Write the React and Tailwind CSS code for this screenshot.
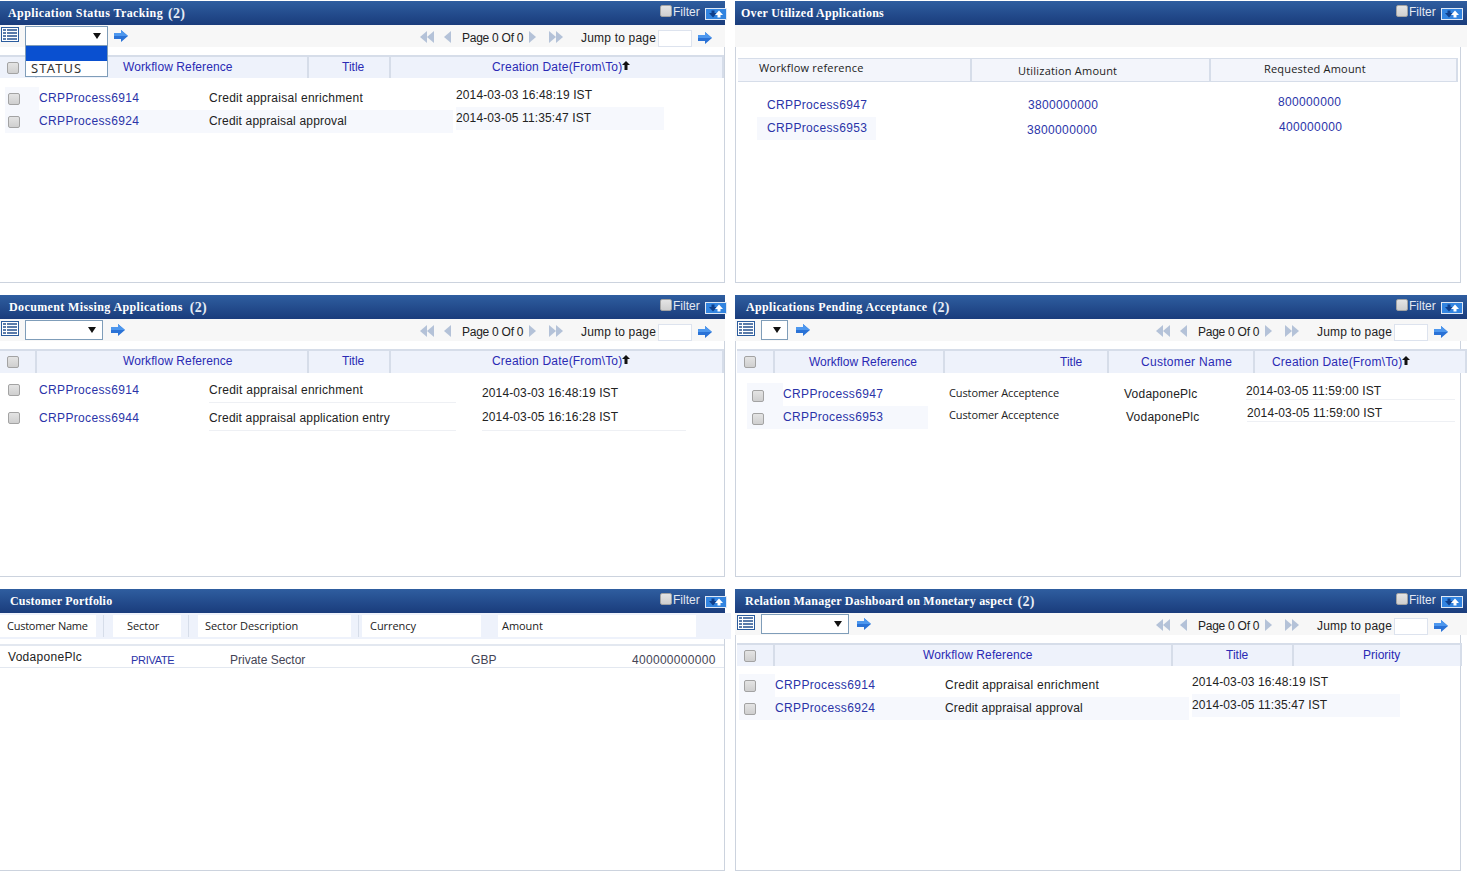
import React from 'react';

const sans = "font-['Liberation_Sans',Arial,sans-serif]";
const open = "font-['Open_Sans',sans-serif]";

const GridIcon = () => (
  <svg width="18" height="15" viewBox="0 0 18 15" className="shrink-0 mb-[4px]">
    <rect x="0.5" y="0.5" width="17" height="14" fill="#fff" stroke="#2b5c9e" />
    <path d="M2 3h3M2 6h3M2 9h3M2 12h3M6 3h10M6 6h10M6 9h10M6 12h10" stroke="#24508f" strokeWidth="1.4" />
  </svg>
);

const GoArrow = () => (
  <svg width="14" height="12" viewBox="0 0 14 12" className="shrink-0">
    <path d="M0 3h7V0l7 6-7 6V9H0z" fill="#2a72d6" />
    <path d="M0 3h7V0l7 6H0z" fill="#4d97ee" />
  </svg>
);

const Tri = ({ flip, double }) => (
  <svg width={double ? 14 : 7} height="12" viewBox={double ? '0 0 14 12' : '0 0 7 12'} className={flip ? 'shrink-0 rotate-180 -mt-[2px]' : 'shrink-0 -mt-[2px]'}>
    <path d="M7 0v12L0 6z" fill="#b4c2d8" />
    {double && <path d="M14 0v12L7 6z" fill="#b4c2d8" />}
  </svg>
);

const Check = ({ className = '' }) => (
  <span className={`block w-[12px] h-[12px] rounded-[2px] border border-[#a3a3a3] bg-linear-to-b from-[#e4e4e4] to-[#cfcfcf] shrink-0 ${className}`}></span>
);

const Select = ({ w }) => (
  <div className={`${w} h-[20px] bg-white border border-[#7f9db9] flex items-center justify-end pr-[6px] shrink-0`}>
    <svg width="8" height="6" viewBox="0 0 8 6"><path d="M0 0h8L4 6z" fill="#111" /></svg>
  </div>
);

const Toolbar = ({ selectW, arrowGap = 'ml-[6px]', iconPad = 'pl-[1px]', width = 'w-[725px]', open: dropdown }) => (
  <div className="relative h-[22px] bg-[#f7f7f7] shrink-0">
    <div className={`${width} h-full flex items-center ${iconPad} pr-[13px] ${sans} text-[12px] text-[#222]`}>
      <GridIcon />
      <div className="w-[6px] shrink-0"></div>
      <Select w={selectW} />
      <div className={arrowGap}><GoArrow /></div>
      <div className="ml-auto mt-[4px] flex items-center">
        <Tri double />
        <div className="ml-[10px]"><Tri /></div>
        <span className="ml-[11px] w-[61px] whitespace-nowrap tracking-[-0.25px]">Page 0 Of 0</span>
        <div className="ml-[6px]"><Tri flip /></div>
        <div className="ml-[13px]"><Tri flip double /></div>
        <span className="ml-[18px] w-[75px] whitespace-nowrap tracking-[0.2px]">Jump to page</span>
        <div className="ml-[2px] w-[34px] h-[17px] bg-white border border-[#dde3ee]"></div>
        <div className="ml-[6px]"><GoArrow /></div>
      </div>
    </div>
    {dropdown && (
      <div className="absolute left-[25px] top-[20px] w-[83px] h-[32px] bg-white border border-[#7f9db9] z-10">
        <div className="h-[15px] bg-[#0a50d0]"></div>
        <div className="text-[13px] leading-[15px] pl-[5px] text-[#333] tracking-[1.1px]">STATUS</div>
      </div>
    )}
  </div>
);

const Panel = ({ title, count, right, pad = 'pl-[8px]', countGap = 'ml-[5px]', children }) => (
  <div className={right ? 'relative w-[732px] h-[282px] flex flex-col' : 'relative w-[725px] h-[282px] flex flex-col'}>
    <div className="h-[24px] shrink-0 bg-linear-to-b from-[#2f5ea0] to-[#1a3c7c] relative flex items-center text-white font-['Liberation_Serif',serif] font-bold text-[12px]">
      <span className={pad}>{title}</span>
      {count && <span className={`${countGap} text-[14px] tracking-[0.3px] text-[#e6ecf5]`}>({count})</span>}
      <div className={`absolute ${right ? 'left-[661px]' : 'left-[660px]'} top-[4px] flex items-start ${sans} font-normal text-[12px] leading-[14px] text-[#e4e9f2]`}>
        <Check />
        <span className="ml-[1px]">Filter</span>
        <svg width="22" height="12" viewBox="0 0 22 12" className="ml-[5px] mt-[3px]">
          <rect x="0.5" y="0.5" width="21" height="11" fill="#3284e0" stroke="#dfe8f5" />
          <path d="M4 5h2.5V2.5h3V5H12l-4 4.5z" fill="#0f3f8c" />
          <path d="M10 7h2.5v2.5h3V7H18l-4-4.5z" fill="#fff" />
        </svg>
      </div>
    </div>
    {children}
  </div>
);

// border box for the table area, sits under toolbar
const Frame = ({ children, right }) => (
  <div className={`flex-1 min-h-0 border-b border-[#ccd3de] border-r ${right ? 'border-l w-[726px]' : ''}`}>
    {children}
  </div>
);

const HeadCell = ({ className, children, link = true }) => (
  <div className={`h-full border-r-2 border-[#d6dde9] flex items-center whitespace-nowrap shrink-0 ${className} ${link ? 'text-[#2a2ab4]' : ''}`}>
    {children}
  </div>
);

const Up = () => (
  <svg width="8" height="9" viewBox="0 0 8 9" className="mb-[3px] shrink-0"><path d="M4 0l4 4H5.5v5h-3V4H0z" fill="#111" /></svg>
);

const Link = ({ children }) => <span className="text-[#2a34a8] tracking-[0.35px]">{children}</span>;

const text12 = `${sans} text-[12px] text-[#222]`;

const WorkflowHead = ({ height }) => (
  <div className={`mt-[8px] ${height} bg-[#eef2fb] border-t-2 border-[#d6dde9] flex ${text12}`}>
    <HeadCell className="w-[37px] pl-[7px]"><Check /></HeadCell>
    <HeadCell className="w-[272px] pl-[86px] pb-[2px] tracking-[0.1px]">Workflow Reference</HeadCell>
    <HeadCell className="w-[82px] pl-[33px] pb-[2px]">Title</HeadCell>
    <HeadCell className="flex-1 pl-[101px] pb-[2px] border-r-0 tracking-[0.2px]">Creation Date(From\To)<Up /></HeadCell>
  </div>
);

export default function App() {
  return (
    <div className="w-[1467px] h-[871px] bg-white overflow-hidden pt-[1px] flex flex-col gap-[12px]">
      {/* row 1 */}
      <div className="flex gap-[10px]">
        <Panel title="Application Status Tracking" count="2" pad="pl-[8px] tracking-[0.4px]">
          <Toolbar selectW="w-[83px]" open />
          <Frame>
            <WorkflowHead height="h-[23px]" />
            <div className={`pt-[9px] ${text12}`}>
              <div className="flex h-[23px] leading-[23px]">
                <div className="ml-[5px] w-[34px] pl-[3px] pt-[6px] shrink-0 bg-[#f6f8fd]"><Check /></div>
                <div className="w-[170px] shrink-0"><Link>CRPProcess6914</Link></div>
                <div className="w-[247px] shrink-0 tracking-[0.27px]">Credit appraisal enrichment</div>
                <div className="-mt-[3px] tracking-[0.12px]">2014-03-03 16:48:19 IST</div>
              </div>
              <div className="flex h-[23px] leading-[23px]">
                <div className="ml-[5px] w-[448px] flex bg-[#f6f8fd] shrink-0">
                  <div className="w-[34px] pl-[3px] pt-[6px] shrink-0"><Check /></div>
                  <div className="w-[170px] shrink-0"><Link>CRPProcess6924</Link></div>
                  <div className="tracking-[0.18px]">Credit appraisal approval</div>
                </div>
                <div className="ml-[3px] w-[208px] h-[23px] -mt-[3px] bg-[#f6f8fd] tracking-[0.12px]">2014-03-05 11:35:47 IST</div>
              </div>
            </div>
          </Frame>
        </Panel>
        <Panel title="Over Utilized Applications" right pad="pl-[6px] tracking-[0.28px]">
          <div className="h-[22px] bg-[#f7f7f7] shrink-0"></div>
          <Frame right>
            <div className={`mt-[11px] ml-[2px] w-[720px] h-[24px] bg-[#f3f5fb] border-t border-b border-[#d6dde9] flex ${open} text-[11px] text-[#222] tracking-[0.2px]`}>
              <HeadCell link={false} className="w-[234px] pl-[21px] pb-[3px]">Workflow reference</HeadCell>
              <HeadCell link={false} className="w-[239px] pl-[46px] pt-[3px]">Utilization Amount</HeadCell>
              <HeadCell link={false} className="flex-1 pl-[53px] pb-[1px] border-r-0">Requested Amount</HeadCell>
            </div>
            <div className={`pt-[12px] ${text12}`}>
              <div className="flex h-[23px] leading-[23px]">
                <div className="w-[31px] shrink-0"></div>
                <div className="w-[261px] shrink-0"><Link>CRPProcess6947</Link></div>
                <div className="w-[250px] shrink-0 text-[#2a34a8] tracking-[0.35px]">3800000000</div>
                <div className="-mt-[3px] text-[#2a34a8] tracking-[0.35px]">800000000</div>
              </div>
              <div className="flex h-[23px] leading-[23px]">
                <div className="ml-[21px] w-[119px] shrink-0 bg-[#f6f8fd] pl-[10px]"><Link>CRPProcess6953</Link></div>
                <div className="w-[151px] shrink-0"></div>
                <div className="w-[252px] shrink-0 mt-[2px] text-[#2a34a8] tracking-[0.35px]">3800000000</div>
                <div className="-mt-[1px] text-[#2a34a8] tracking-[0.35px]">400000000</div>
              </div>
            </div>
          </Frame>
        </Panel>
      </div>

      {/* row 2 */}
      <div className="flex gap-[10px]">
        <Panel title="Document Missing Applications" count="2" pad="pl-[9px] tracking-[0.38px]" countGap="ml-[7px]">
          <Toolbar selectW="w-[78px]" arrowGap="ml-[8px]" />
          <Frame>
            <WorkflowHead height="h-[24px]" />
            <div className={`pt-[4px] ${text12}`}>
              <div className="flex h-[26px] leading-[26px] mb-[2px]">
                <div className="w-[39px] pl-[8px] pt-[7px] shrink-0"><Check /></div>
                <div className="w-[170px] shrink-0"><Link>CRPProcess6914</Link></div>
                <div className="w-[247px] mr-[26px] shrink-0 tracking-[0.27px] border-b border-[#eef0f4]">Credit appraisal enrichment</div>
                <div className="mt-[3px] tracking-[0.12px]">2014-03-03 16:48:19 IST</div>
              </div>
              <div className="flex h-[26px] leading-[26px]">
                <div className="w-[39px] pl-[8px] pt-[7px] shrink-0"><Check /></div>
                <div className="w-[170px] shrink-0"><Link>CRPProcess6944</Link></div>
                <div className="w-[247px] mr-[26px] shrink-0 tracking-[0.18px] border-b border-[#eef0f4]">Credit appraisal application entry</div>
                <div className="-mt-[1px] w-[204px] tracking-[0.12px] border-b border-[#eef0f4] h-[27px]">2014-03-05 16:16:28 IST</div>
              </div>
            </div>
          </Frame>
        </Panel>
        <Panel title="Applications Pending Acceptance" count="2" right pad="pl-[11px] tracking-[0.35px]">
          <Toolbar selectW="w-[27px]" arrowGap="ml-[8px]" iconPad="pl-[2px]" width="w-[726px]" />
          <Frame right>
            <div className={`mt-[8px] ml-[1px] w-[730px] h-[24px] bg-[#eef2fb] border-t-2 border-[#d6dde9] flex ${text12}`}>
              <HeadCell className="w-[38px] pl-[7px]"><Check /></HeadCell>
              <HeadCell className="w-[170px] pl-[34px] pb-[1px]">Workflow Reference</HeadCell>
              <HeadCell className="w-[164px] pl-[115px] pb-[1px]">Title</HeadCell>
              <HeadCell className="w-[146px] pl-[32px] pb-[1px] tracking-[0.3px]">Customer Name</HeadCell>
              <HeadCell className="flex-1 pl-[17px] pb-[1px] border-r-0 tracking-[0.2px]">Creation Date(From\To)<Up /></HeadCell>
            </div>
            <div className={`pt-[10px] ${text12}`}>
              <div className="flex h-[23px] leading-[23px]">
                <div className="ml-[11px] w-[36px] pl-[5px] pt-[7px] shrink-0 bg-[#f6f8fd]"><Check /></div>
                <div className="w-[166px] shrink-0"><Link>CRPProcess6947</Link></div>
                <div className={`w-[175px] -mt-[2px] shrink-0 ${open} text-[11px] tracking-[-0.1px]`}>Customer Acceptence</div>
                <div className="w-[122px] shrink-0 tracking-[0.25px]">VodaponePlc</div>
                <div className="w-[209px] h-[20px] -mt-[3px] tracking-[0.12px] border-b border-[#eef0f4]">2014-03-05 11:59:00 IST</div>
              </div>
              <div className="flex h-[23px] leading-[23px]">
                <div className="ml-[11px] w-[181px] flex bg-[#f6f8fd] shrink-0">
                  <div className="w-[36px] pl-[5px] pt-[7px] shrink-0"><Check /></div>
                  <Link>CRPProcess6953</Link>
                </div>
                <div className={`ml-[21px] w-[177px] shrink-0 -mt-[3px] ${open} text-[11px] tracking-[-0.1px]`}>Customer Acceptence</div>
                <div className="w-[121px] shrink-0 tracking-[0.25px]">VodaponePlc</div>
                <div className="w-[208px] h-[20px] -mt-[4px] tracking-[0.12px] border-b border-[#eef0f4]">2014-03-05 11:59:00 IST</div>
              </div>
            </div>
          </Frame>
        </Panel>
      </div>

      {/* row 3 */}
      <div className="flex gap-[10px]">
        <Panel title="Customer Portfolio" pad="pl-[10px] tracking-[0.2px]">
          <div className="w-[731px] h-[26px] bg-[#eef2fb] shrink-0 flex pt-[2px] pb-[2px]">
            <div className={`flex ${open} text-[11px] text-[#222] tracking-[-0.05px] h-[22px] items-center`}>
              <div className="w-[96px] h-full bg-white pl-[7px] flex items-center tracking-[-0.25px]">Customer Name</div>
              <div className="ml-[7px] w-[1px] h-full bg-[#d6dde9]"></div>
              <div className="ml-[9px] w-[68px] h-full bg-white pl-[14px] flex items-center">Sector</div>
              <div className="ml-[7px] w-[1px] h-full bg-[#d6dde9]"></div>
              <div className="ml-[9px] w-[153px] h-full bg-white pl-[7px] flex items-center">Sector Description</div>
              <div className="ml-[7px] w-[1px] h-full bg-[#d6dde9]"></div>
              <div className="ml-[3px] w-[119px] h-full bg-white pl-[8px] flex items-center">Currency</div>
              <div className="ml-[17px] w-[198px] h-full bg-white pl-[4px] flex items-center">Amount</div>
            </div>
          </div>
          <Frame>
            <div className={`mt-[5px] h-[24px] border-t-2 border-b border-[#e3e8f0] flex ${text12}`}>
              <div className="w-[131px] pl-[8px] shrink-0 leading-[22px] tracking-[0.3px]">VodaponePlc</div>
              <div className="w-[99px] shrink-0 pt-[10px]">
                <div className="h-[8px] overflow-hidden leading-[8px] text-[11px] tracking-[-0.3px] text-[#2a34a8]">PRIVATE</div>
              </div>
              <div className="w-[241px] shrink-0 leading-[28px] text-[#445]">Private Sector</div>
              <div className="w-[161px] shrink-0 leading-[28px] tracking-[0.1px] text-[#445]">GBP</div>
              <div className="leading-[28px] tracking-[0.3px] text-[#445]">400000000000</div>
            </div>
          </Frame>
        </Panel>
        <Panel title="Relation Manager Dashboard on Monetary aspect" count="2" right pad="pl-[10px] tracking-[0.24px]">
          <Toolbar selectW="w-[88px]" arrowGap="ml-[8px]" iconPad="pl-[2px]" width="w-[726px]" />
          <Frame right>
            <div className={`mt-[8px] ml-[1px] w-[725px] h-[23px] bg-[#eef2fb] border-t-2 border-[#d6dde9] flex ${text12}`}>
              <HeadCell className="w-[38px] pl-[7px]"><Check /></HeadCell>
              <HeadCell className="w-[398px] pl-[148px] pb-[2px] tracking-[0.1px]">Workflow Reference</HeadCell>
              <HeadCell className="w-[121px] pl-[53px] pb-[2px]">Title</HeadCell>
              <HeadCell className="flex-1 pl-[69px] pb-[2px] border-r-0">Priority</HeadCell>
            </div>
            <div className={`pt-[8px] ${text12}`}>
              <div className="flex h-[23px] leading-[23px]">
                <div className="ml-[3px] w-[36px] pl-[5px] pt-[6px] shrink-0 bg-[#f6f8fd]"><Check /></div>
                <div className="w-[170px] shrink-0"><Link>CRPProcess6914</Link></div>
                <div className="w-[247px] shrink-0 tracking-[0.27px]">Credit appraisal enrichment</div>
                <div className="-mt-[3px] tracking-[0.12px]">2014-03-03 16:48:19 IST</div>
              </div>
              <div className="flex h-[23px] leading-[23px]">
                <div className="ml-[3px] w-[450px] flex bg-[#f6f8fd] shrink-0">
                  <div className="w-[36px] pl-[5px] pt-[6px] shrink-0"><Check /></div>
                  <div className="w-[170px] shrink-0"><Link>CRPProcess6924</Link></div>
                  <div className="tracking-[0.18px]">Credit appraisal approval</div>
                </div>
                <div className="ml-[3px] w-[208px] h-[23px] -mt-[3px] bg-[#f6f8fd] tracking-[0.12px]">2014-03-05 11:35:47 IST</div>
              </div>
            </div>
          </Frame>
        </Panel>
      </div>
    </div>
  );
}
